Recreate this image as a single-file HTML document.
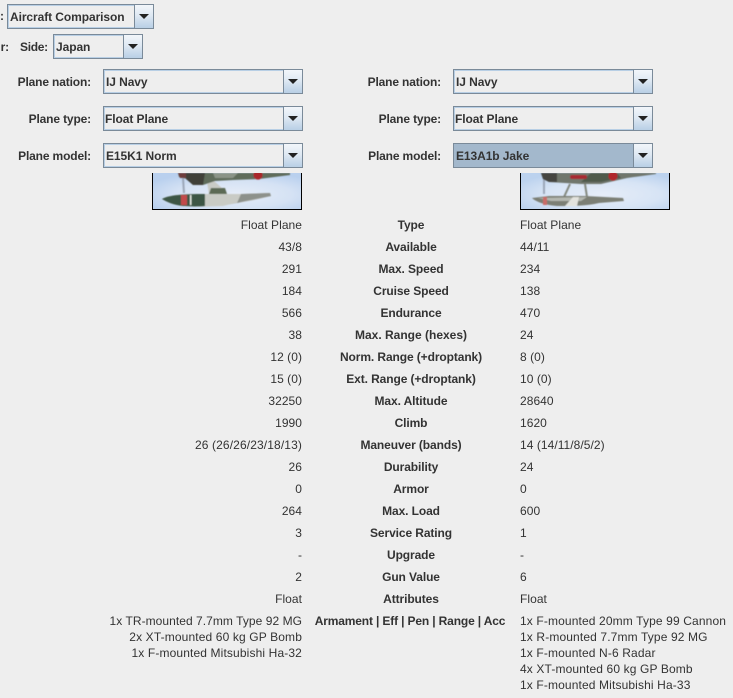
<!DOCTYPE html>
<html>
<head>
<meta charset="utf-8">
<style>
html,body{margin:0;padding:0;background:#eeeeee;}
body{width:733px;height:698px;position:relative;overflow:hidden;font-family:"Liberation Sans",Arial,sans-serif;font-size:12px;color:#333333;}
.t{position:absolute;white-space:nowrap;height:16px;line-height:16px;}
.l{text-align:right;right:431px;letter-spacing:.05px;}
.r{left:520px;letter-spacing:.05px;}
.c{font-weight:bold;left:261px;width:300px;text-align:center;letter-spacing:-.1px;}
.a{letter-spacing:.13px;}
.lb{font-weight:bold;text-align:right;letter-spacing:-.15px;}
.cb{position:absolute;box-sizing:border-box;border:1px solid #7a8a99;height:25px;background:#eeeeee;}
.cb .in{position:absolute;left:0;top:0;bottom:0;border:1px solid #b8cfe5;background:#eeeeee;box-sizing:border-box;font-weight:bold;line-height:22px;padding-left:1px;white-space:nowrap;letter-spacing:-.08px;}
.cb .btn{position:absolute;right:0;top:0;bottom:0;width:19px;box-sizing:border-box;border-left:1px solid #7a8a99;background:linear-gradient(#f2f6fa 0%,#dfe9f3 45%,#b8cfe5 100%);}
.cb .btn:after{content:"";position:absolute;left:4px;top:9px;border-left:5px solid transparent;border-right:5px solid transparent;border-top:5px solid #222;}
.sel .in{background:#a3b8cc;border-color:#a3b8cc;}
.img{position:absolute;top:173px;height:37px;width:150px;box-sizing:border-box;border:1px solid #000;border-top:0;overflow:hidden;}
</style>
</head>
<body>

<span class="t lb" style="left:0;top:8px;">:</span>
<div class="cb" style="left:7px;top:4px;width:147px;"><div class="in" style="width:127px;">Aircraft Comparison</div><div class="btn"></div></div>

<span class="t lb" style="left:0;width:9px;top:39px;">r:</span>
<span class="t lb" style="left:20px;top:39px;letter-spacing:-.3px;">Side:</span>
<div class="cb" style="left:53px;top:34px;width:90px;"><div class="in" style="width:70px;">Japan</div><div class="btn"></div></div>

<span class="t lb" style="left:0;width:91px;top:74px;">Plane nation:</span>
<span class="t lb" style="left:0;width:91px;top:111px;">Plane type:</span>
<span class="t lb" style="left:0;width:91px;top:148px;">Plane model:</span>
<div class="cb" style="left:103px;top:69px;width:200px;"><div class="in" style="width:180px;">IJ Navy</div><div class="btn"></div></div>
<div class="cb" style="left:103px;top:106px;width:200px;"><div class="in" style="width:180px;padding-left:0;">Float Plane</div><div class="btn"></div></div>
<div class="cb" style="left:103px;top:143px;width:200px;"><div class="in" style="width:180px;">E15K1 Norm</div><div class="btn"></div></div>

<span class="t lb" style="left:300px;width:141px;top:74px;">Plane nation:</span>
<span class="t lb" style="left:300px;width:141px;top:111px;">Plane type:</span>
<span class="t lb" style="left:300px;width:141px;top:148px;">Plane model:</span>
<div class="cb" style="left:453px;top:69px;width:200px;"><div class="in" style="width:180px;">IJ Navy</div><div class="btn"></div></div>
<div class="cb" style="left:453px;top:106px;width:200px;"><div class="in" style="width:180px;padding-left:0;">Float Plane</div><div class="btn"></div></div>
<div class="cb sel" style="left:453px;top:143px;width:200px;"><div class="in" style="width:180px;">E13A1b Jake</div><div class="btn"></div></div>

<div class="img" style="left:152px;">
<svg width="148" height="36" viewBox="0 0 148 36" style="display:block">
<defs>
<radialGradient id="s1" cx=".55" cy=".6" r=".65"><stop offset="0" stop-color="#e6edf8"/><stop offset=".6" stop-color="#d5e2f4"/><stop offset="1" stop-color="#b9d0ee"/></radialGradient>
<filter id="b" x="-5%" y="-5%" width="110%" height="110%"><feGaussianBlur stdDeviation=".5"/></filter>
</defs>
<rect width="148" height="36" fill="url(#s1)"/>
<g filter="url(#b)">
<path d="M30 5 L31 20" stroke="#8f99aa" stroke-width="2" fill="none" opacity=".8"/>
<path d="M54 9 L60 7 L70 16 L74 21 L56 21 Z" fill="#c9cbc5"/>
<path d="M58 15 L72 15 L74 21 L56 21 Z" fill="#5b6b55"/>
<path d="M25 0 L26 4 L34 6 L40 12 L50 12 L62 8 L80 7 L106 6 L137 2 L137 0 Z" fill="#5f6c5a"/>
<path d="M25 0 L27 5 L33 5 L33 0 Z" fill="#6e3d3a"/>
<path d="M33 0 L33 6 L40 12 L50 12 L52 0 Z" fill="#3f3f38"/>
<path d="M60 0 L85 0 L80 5 L62 5 Z" fill="#8b9487"/>
<circle cx="105" cy="2" r="4.6" fill="#a9252c"/>
<path d="M9 26 C16 22 30 21 52 21 L90 21 L117 20 L118 23 C106 26 96 28 84 30 C70 33 50 34 34 33 C22 32 14 29 9 26 Z" fill="#b3b5ae"/>
<path d="M9 26 C16 22 30 21 52 21 L52 33 C40 34 34 33 30 33 C20 32 14 29 9 26 Z" fill="#3d5745"/>
<path d="M52 21 L90 21 L86 29 L70 33 L52 33.500 Z" fill="#c9cbc5"/>
<path d="M88 21 L117 20 L118 23 L92 28 L84 30 Z" fill="#8d918b"/>
<rect x="28" y="22" width="6" height="10" fill="#c24a4b"/>
<rect x="37" y="22" width="1.400" height="10" fill="#e9eee8"/>
</g>
</svg>
</div>

<div class="img" style="left:520px;">
<svg width="148" height="36" viewBox="0 0 148 36" style="display:block">
<defs>
<radialGradient id="s2" cx=".55" cy=".6" r=".65"><stop offset="0" stop-color="#e6edf8"/><stop offset=".6" stop-color="#d7e4f5"/><stop offset="1" stop-color="#bcd2ee"/></radialGradient>
</defs>
<rect width="148" height="36" fill="url(#s2)"/>
<g filter="url(#b)">
<path d="M23 5 L23 21" stroke="#8f99aa" stroke-width="2" fill="none" opacity=".8"/>
<path d="M49 11 L43 24 M64 11 L66 24" stroke="#83887f" stroke-width="2" fill="none"/>
<path d="M20 0 L22 6 L28 9 L60 11 L80 11 L106 5 L135 1 L135 0 Z" fill="#70766c"/>
<path d="M20 0 L22 6 L28 9 L36 9 L36 0 Z" fill="#44453f"/>
<path d="M60 9 L80 9 L100 5 L96 0 L70 0 Z" fill="#4f5a4c"/>
<rect x="49" y="2" width="17" height="4" rx="2" fill="#a82c33"/>
<circle cx="92" cy="3" r="4.600" fill="#b0262c"/>
<path d="M11 25 L28 23 L64 23 L102 25 L103 28 L78 30 C66 33 50 33 36 33 C24 32 15 29 11 25 Z" fill="#7c7f75"/>
<path d="M17 25 L66 24 L60 28 L30 28 Z" fill="#b4b7b0"/>
<rect x="22" y="24" width="4" height="8" fill="#c96c68"/>
<path d="M44 33 L52 24 L58 24 L56 33 Z" fill="#e3e3de"/>
</g>
</svg>
</div>

<span class="t l" style="top:217px;">Float Plane</span><span class="t c" style="top:217px;">Type</span><span class="t r" style="top:217px;">Float Plane</span>
<span class="t l" style="top:239px;">43/8</span><span class="t c" style="top:239px;">Available</span><span class="t r" style="top:239px;">44/11</span>
<span class="t l" style="top:261px;">291</span><span class="t c" style="top:261px;">Max. Speed</span><span class="t r" style="top:261px;">234</span>
<span class="t l" style="top:283px;">184</span><span class="t c" style="top:283px;">Cruise Speed</span><span class="t r" style="top:283px;">138</span>
<span class="t l" style="top:305px;">566</span><span class="t c" style="top:305px;">Endurance</span><span class="t r" style="top:305px;">470</span>
<span class="t l" style="top:327px;">38</span><span class="t c" style="top:327px;letter-spacing:0;">Max. Range (hexes)</span><span class="t r" style="top:327px;">24</span>
<span class="t l" style="top:349px;">12 (0)</span><span class="t c" style="top:349px;">Norm. Range (+droptank)</span><span class="t r" style="top:349px;">8 (0)</span>
<span class="t l" style="top:371px;">15 (0)</span><span class="t c" style="top:371px;">Ext. Range (+droptank)</span><span class="t r" style="top:371px;">10 (0)</span>
<span class="t l" style="top:393px;">32250</span><span class="t c" style="top:393px;">Max. Altitude</span><span class="t r" style="top:393px;">28640</span>
<span class="t l" style="top:415px;">1990</span><span class="t c" style="top:415px;">Climb</span><span class="t r" style="top:415px;">1620</span>
<span class="t l" style="top:437px;letter-spacing:.12px;">26 (26/26/23/18/13)</span><span class="t c" style="top:437px;">Maneuver (bands)</span><span class="t r" style="top:437px;">14 (14/11/8/5/2)</span>
<span class="t l" style="top:459px;">26</span><span class="t c" style="top:459px;">Durability</span><span class="t r" style="top:459px;">24</span>
<span class="t l" style="top:481px;">0</span><span class="t c" style="top:481px;">Armor</span><span class="t r" style="top:481px;">0</span>
<span class="t l" style="top:503px;">264</span><span class="t c" style="top:503px;">Max. Load</span><span class="t r" style="top:503px;">600</span>
<span class="t l" style="top:525px;">3</span><span class="t c" style="top:525px;">Service Rating</span><span class="t r" style="top:525px;">1</span>
<span class="t l" style="top:547px;">-</span><span class="t c" style="top:547px;">Upgrade</span><span class="t r" style="top:547px;">-</span>
<span class="t l" style="top:569px;">2</span><span class="t c" style="top:569px;">Gun Value</span><span class="t r" style="top:569px;">6</span>
<span class="t l" style="top:591px;">Float</span><span class="t c" style="top:591px;">Attributes</span><span class="t r" style="top:591px;">Float</span>

<span class="t l" style="top:613px;">1x TR-mounted 7.7mm Type 92 MG</span>
<span class="t l a" style="top:629px;">2x XT-mounted 60 kg GP Bomb</span>
<span class="t l a" style="top:645px;">1x F-mounted Mitsubishi Ha-32</span>
<span class="t c" style="top:613px;left:260px;letter-spacing:-.15px;">Armament | Eff | Pen | Range | Acc</span>
<span class="t r a" style="top:613px;">1x F-mounted 20mm Type 99 Cannon</span>
<span class="t r a" style="top:629px;">1x R-mounted 7.7mm Type 92 MG</span>
<span class="t r a" style="top:645px;">1x F-mounted N-6 Radar</span>
<span class="t r a" style="top:661px;">4x XT-mounted 60 kg GP Bomb</span>
<span class="t r a" style="top:677px;">1x F-mounted Mitsubishi Ha-33</span>

</body>
</html>
